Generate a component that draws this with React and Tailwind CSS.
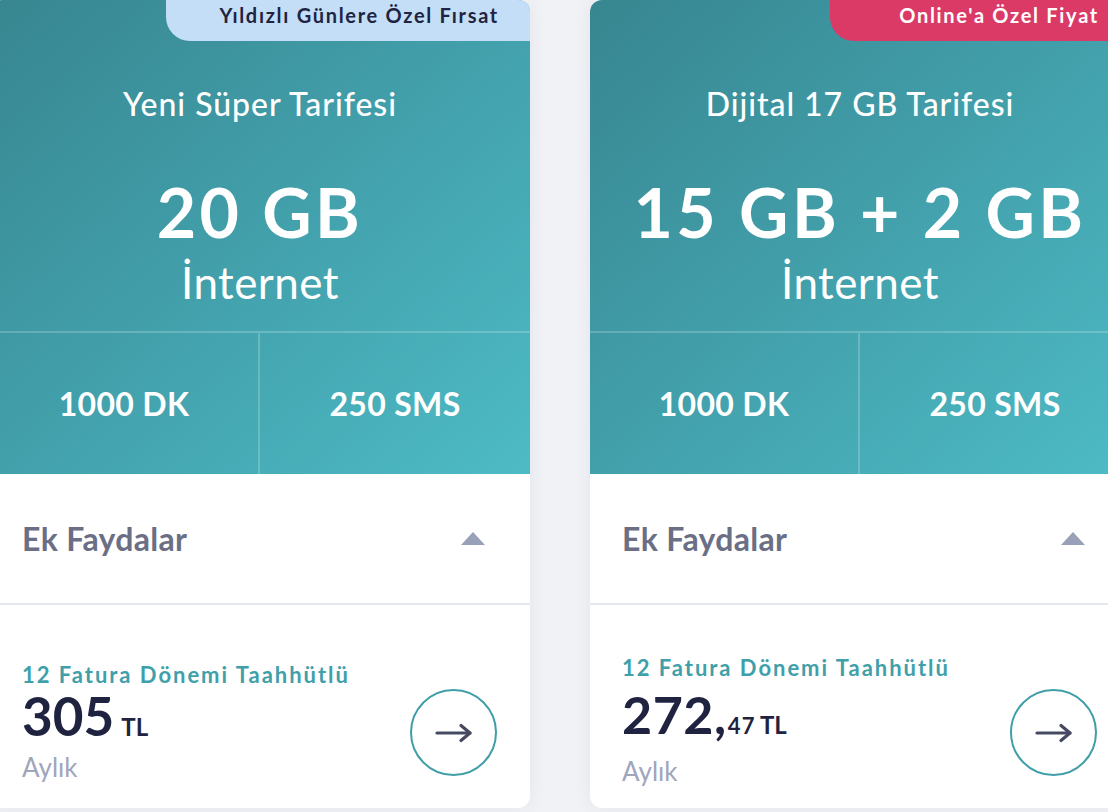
import React from "react";

function Arrow() {
  return (
    <svg width="40" height="24" viewBox="0 0 40 24" fill="none">
      <path d="M3 12H36" stroke="#464a60" strokeWidth="3.2" strokeLinecap="round" />
      <path d="M27 4.5L36 12L27 19.5" stroke="#464a60" strokeWidth="3.2" strokeLinecap="round" strokeLinejoin="round" />
    </svg>
  );
}

function Triangle() {
  return (
    <svg width="24" height="13" viewBox="0 0 24 13">
      <path d="M12 0L24 13H0Z" fill="#99a1b9" />
    </svg>
  );
}

function Card({ badge, badgeClass, badgeWidth, title, big, priceBlock }) {
  return (
    <div className="w-[540px] h-[808px] shrink-0 bg-white rounded-[12px] overflow-hidden shadow-[0_0_18px_rgba(40,50,90,0.07)] flex flex-col">
      <div className="relative h-[474px] bg-gradient-to-br from-[#378690] via-[#42a0ab] to-[#4dbbc5] text-white flex flex-col">
        <div className={`absolute top-0 right-0 h-[41px] ${badgeWidth} ${badgeClass} rounded-bl-[24px] flex items-start justify-end pr-[31px] pt-[5px]`}>
          <span className="text-[20px] font-bold tracking-[0.085em] leading-[20px] whitespace-nowrap">{badge}</span>
        </div>
        <div className="h-[331px] flex flex-col items-center">
          <div className="mt-[86px] text-[32px] leading-[36px] font-medium tracking-[0.03em]">{title}</div>
          <div className="mt-[58px] text-[68px] leading-[64px] font-bold tracking-[0.05em]">{big}</div>
          <div className="mt-[16px] text-[44px] leading-[44px] font-normal tracking-[0.01em]">İnternet</div>
        </div>
        <div className="flex-1 grid grid-cols-2 border-t-2 border-white/20">
          <div className="flex items-center justify-center border-r-2 border-white/20 text-[32px] font-bold tracking-[0.01em]">1000 DK</div>
          <div className="flex items-center justify-center text-[32px] font-bold tracking-[0.01em]">250 SMS</div>
        </div>
      </div>
      <div className="h-[131px] flex items-center justify-between pl-[32px] pr-[45px] border-b-2 border-[#e5e7ef]">
        <span className="text-[32px] font-bold text-[#6b6f85] tracking-[0.01em]">Ek Faydalar</span>
        <Triangle />
      </div>
      <div className="flex-1 flex justify-between pl-[32px] pr-[33px]">
        {priceBlock}
        <div className="mt-[84px] w-[87px] h-[87px] rounded-full border-2 border-[#3f9ea8] flex items-center justify-center">
          <Arrow />
        </div>
      </div>
    </div>
  );
}

export default function App() {
  return (
    <div className="w-[1108px] h-[812px] overflow-hidden bg-[#f1f2f6] font-['Lato','Noto_Sans',sans-serif]">
      <div className="flex gap-[60px] ml-[-10px]">
        <Card
          badge="Yıldızlı Günlere Özel Fırsat"
          badgeClass="bg-[#c4def7] text-[#1e2441]"
          badgeWidth="w-[364px]"
          title="Yeni Süper Tarifesi"
          big="20 GB"
          priceBlock={
            <div className="flex flex-col pt-[58px]">
              <div className="text-[22px] leading-[24px] font-bold text-[#40a0aa] tracking-[0.09em] whitespace-nowrap">12 Fatura Dönemi Taahhütlü</div>
              <div className="mt-[5px] flex items-baseline text-[#1f2340] font-bold">
                <span className="text-[53px] leading-[48px]">305</span>
                <span className="ml-[7px] text-[24px] leading-[24px]">TL</span>
              </div>
              <div className="mt-[15px] text-[26px] leading-[24px] text-[#a0a5bd]">Aylık</div>
            </div>
          }
        />
        <Card
          badge="Online'a Özel Fiyat"
          badgeClass="bg-[#dc3a66] text-white"
          badgeWidth="w-[300px]"
          title="Dijital 17 GB Tarifesi"
          big="15 GB + 2 GB"
          priceBlock={
            <div className="flex flex-col pt-[51px]">
              <div className="text-[22px] leading-[24px] font-bold text-[#40a0aa] tracking-[0.09em] whitespace-nowrap">12 Fatura Dönemi Taahhütlü</div>
              <div className="mt-[10px] flex items-baseline text-[#1f2340] font-bold">
                <span className="text-[52px] leading-[48px] tracking-[0.01em]">272,</span>
                <span className="ml-[1px] text-[22px] leading-[24px] tracking-[0.06em]">47</span>
                <span className="ml-[4px] text-[24px] leading-[24px]">TL</span>
              </div>
              <div className="mt-[21px] text-[26px] leading-[24px] text-[#a0a5bd]">Aylık</div>
            </div>
          }
        />
      </div>
    </div>
  );
}
